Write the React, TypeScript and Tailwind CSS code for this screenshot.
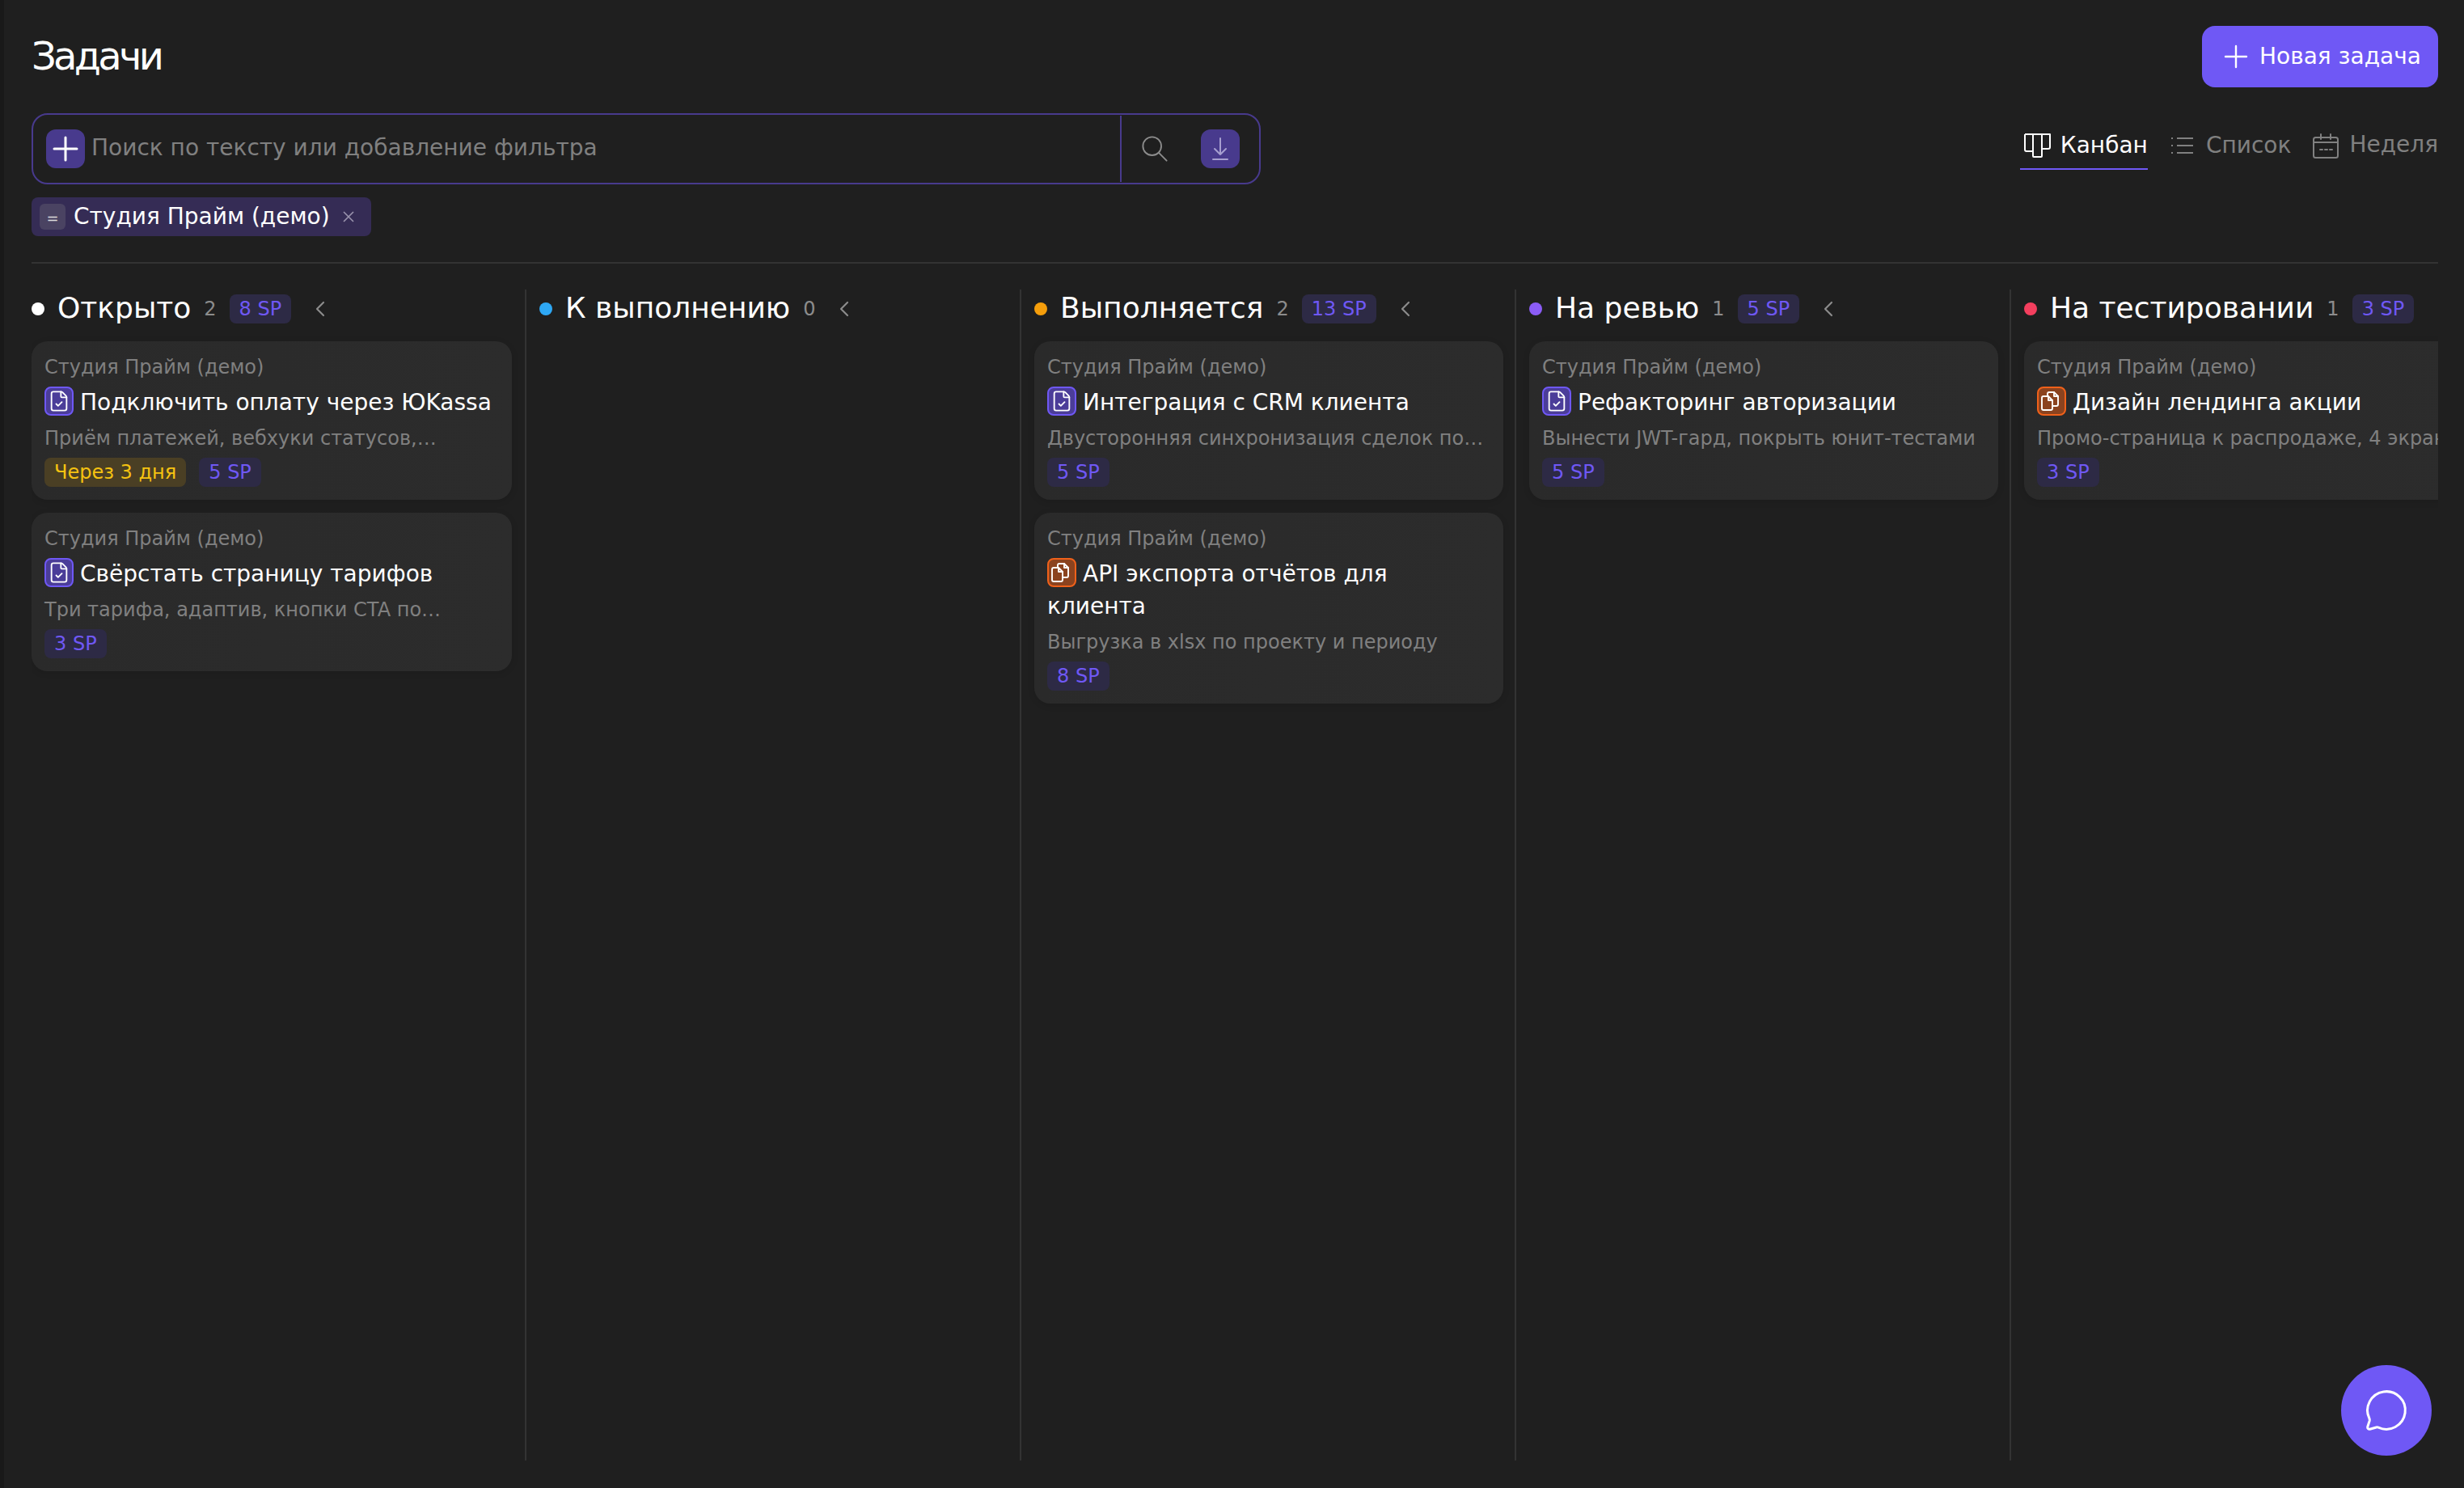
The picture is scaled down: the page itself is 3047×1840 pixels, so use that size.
import React from "react";

const SP = ({ v }: { v: string }) => (
  <span className="inline-flex h-[36px] items-center rounded-[8px] bg-[#2d2a45] px-[12px] text-[24px] leading-none text-[#6f58f5]">{v}</span>
);

const TaskIcon = () => (
  <span className="mr-[8px] inline-flex h-[36px] w-[36px] shrink-0 items-center justify-center rounded-[8px] border-2 border-[#6f58f5] bg-[#4b3d99] align-top">
    <svg width="28" height="28" viewBox="0 0 24 24" fill="none" stroke="#fff" strokeWidth="1.6" strokeLinecap="round" strokeLinejoin="round">
      <path d="M6 22a2 2 0 0 1-2-2V4a2 2 0 0 1 2-2h8a2.4 2.4 0 0 1 1.706.706l3.588 3.588A2.4 2.4 0 0 1 20 8v12a2 2 0 0 1-2 2z" />
      <path d="M14 2v5a1 1 0 0 0 1 1h5" />
      <path d="m9 15 2 2 4-4" />
    </svg>
  </span>
);

const CopyIcon = () => (
  <span className="mr-[8px] inline-flex h-[36px] w-[36px] shrink-0 items-center justify-center rounded-[8px] border-2 border-[#f0611a] bg-[#8b431f] align-top">
    <svg width="32" height="32" viewBox="0 0 32 32" fill="none" stroke="#fff" strokeWidth="1.9" strokeLinecap="round" strokeLinejoin="round">
      <path d="M4 12a2 2 0 0 1 2-2h6l5 5v10a2 2 0 0 1-2 2H6a2 2 0 0 1-2-2z" />
      <path d="M12 10v5h5" />
      <path d="M11 10V7a2 2 0 0 1 2-2h6l5 5v10a2 2 0 0 1-2 2h-5" />
      <path d="M19 5v5h5" />
    </svg>
  </span>
);

type Card = { title: string; desc: string; sp: string; kind: "task" | "copy"; due?: string };

const CardView = ({ c }: { c: Card }) => (
  <div className="flex flex-col rounded-[20px] bg-gradient-to-r from-[#2a2a2a] to-[#2c2c2c] p-[16px] shadow-[0_2px_8px_rgba(0,0,0,0.12)]">
    <div className="h-[32px] whitespace-nowrap text-[24px] leading-[32px] text-[#808080]">Студия Прайм (демо)</div>
    <div className="mt-[8px] text-[28px] leading-[40px] text-white">
      {c.kind === "task" ? <TaskIcon /> : <CopyIcon />}
      {c.title}
    </div>
    <div className="mt-[8px] h-[32px] whitespace-nowrap text-[24px] leading-[32px] text-[#808080]">{c.desc}</div>
    <div className="mt-[8px] flex gap-[16px]">
      {c.due && (
        <span className="inline-flex h-[36px] items-center rounded-[8px] bg-[#4a3f24] px-[12px] text-[24px] leading-none text-[#f5c211]">{c.due}</span>
      )}
      <SP v={c.sp} />
    </div>
  </div>
);

const Chevron = () => (
  <svg width="32" height="32" viewBox="0 0 24 24" fill="none" stroke="#8c8c8c" strokeWidth="1.6" strokeLinecap="round" strokeLinejoin="round">
    <path d="m15 18-6-6 6-6" />
  </svg>
);

type Col = { name: string; dot: string; count: string; sp?: string; chevron: boolean; cards: Card[]; cls: string };

const rest = "w-[612px] border-l-2 border-[#333333] pl-[16px] pr-[14px]";

const cols: Col[] = [
  {
    name: "Открыто",
    dot: "bg-white",
    count: "2",
    sp: "8 SP",
    chevron: true,
    cls: "w-[610px] pr-[16px]",
    cards: [
      { title: "Подключить оплату через ЮKassa", desc: "Приём платежей, вебхуки статусов,…", sp: "5 SP", kind: "task", due: "Через 3 дня" },
      { title: "Свёрстать страницу тарифов", desc: "Три тарифа, адаптив, кнопки CTA по…", sp: "3 SP", kind: "task" },
    ],
  },
  { name: "К выполнению", dot: "bg-[#2ea8f5]", count: "0", chevron: true, cls: rest, cards: [] },
  {
    name: "Выполняется",
    dot: "bg-[#f59e0b]",
    count: "2",
    sp: "13 SP",
    chevron: true,
    cls: rest,
    cards: [
      { title: "Интеграция с CRM клиента", desc: "Двусторонняя синхронизация сделок по…", sp: "5 SP", kind: "task" },
      { title: "API экспорта отчётов для клиента", desc: "Выгрузка в xlsx по проекту и периоду", sp: "8 SP", kind: "copy" },
    ],
  },
  {
    name: "На ревью",
    dot: "bg-[#8b5cf6]",
    count: "1",
    sp: "5 SP",
    chevron: true,
    cls: rest,
    cards: [{ title: "Рефакторинг авторизации", desc: "Вынести JWT-гард, покрыть юнит-тестами", sp: "5 SP", kind: "task" }],
  },
  {
    name: "На тестировании",
    dot: "bg-[#f43f5e]",
    count: "1",
    sp: "3 SP",
    chevron: false,
    cls: rest,
    cards: [{ title: "Дизайн лендинга акции", desc: "Промо-страница к распродаже, 4 экрана", sp: "3 SP", kind: "copy" }],
  },
];

const Column = ({ c }: { c: Col }) => (
  <div className={`h-full shrink-0 ${c.cls}`}>
    <div className="flex h-[64px] items-start pt-[6px]">
      <div className="flex h-[36px] items-center whitespace-nowrap">
        <span className={`h-[16px] w-[16px] shrink-0 rounded-full ${c.dot}`} />
        <span className="mb-[3px] ml-[16px] text-[36px] leading-none text-white">{c.name}</span>
        <span className="ml-[16px] text-[24px] leading-none text-[#8c8c8c]">{c.count}</span>
        {c.sp && (
          <span className="ml-[16px]">
            <SP v={c.sp} />
          </span>
        )}
        {c.chevron && (
          <span className="ml-[20px] flex">
            <Chevron />
          </span>
        )}
      </div>
    </div>
    <div className="flex flex-col gap-[16px]">
      {c.cards.map((card) => (
        <CardView key={card.title} c={card} />
      ))}
    </div>
  </div>
);

export default function App() {
  return (
    <div
      className="flex h-[1840px] w-[3047px] overflow-hidden bg-[#1f1f1f] text-white"
      style={{ fontFamily: '"DejaVu Sans", sans-serif' }}
    >
      <div className="w-[5px] shrink-0 bg-[#191919]" />
      <div className="flex min-w-0 flex-1 flex-col pl-[34px] pr-[32px]">
        <div className="flex h-[108px] items-start justify-between pt-[32px]">
          <h1 className="mt-[-1px] text-[48px] font-medium leading-[76px] tracking-[-3.7px] text-white">Задачи</h1>
          <button className="flex h-[76px] w-[292px] items-center gap-[13px] rounded-[16px] bg-[#6f58f5] pl-[26px] text-[28px] text-white">
            <svg width="32" height="32" viewBox="0 0 32 32" fill="none" stroke="#fff" strokeWidth="2.4" strokeLinecap="round">
              <path d="M16 3v26M3 16h26" />
            </svg>
            Новая задача
          </button>
        </div>

        <div className="mt-[32px] flex items-start justify-between">
          <div>
            <div className="flex h-[88px] w-[1520px] items-center rounded-[20px] border-2 border-[#483a8d]">
              <span className="ml-[16px] flex h-[48px] w-[48px] shrink-0 items-center justify-center rounded-[12px] bg-[#483a8d]">
                <svg width="32" height="32" viewBox="0 0 32 32" fill="none" stroke="#fff" strokeWidth="3" strokeLinecap="round">
                  <path d="M16 2v28M2 16h28" />
                </svg>
              </span>
              <span className="mb-[2px] ml-[8px] flex-1 whitespace-nowrap text-[28px] text-[#808080]">Поиск по тексту или добавление фильтра</span>
              <span className="h-[82px] w-[2px] bg-[#483a8d]" />
              <span className="ml-[24px] flex w-[34px]">
                <svg width="36" height="36" viewBox="0 0 36 36" fill="none" stroke="#8c8c8c" strokeWidth="2" strokeLinecap="round">
                  <circle cx="14.5" cy="14.5" r="12" />
                  <path d="m23.5 23.5 10 10" />
                </svg>
              </span>
              <span className="ml-[40px] mr-[24px] flex h-[48px] w-[48px] items-center justify-center rounded-[12px] bg-[#483a8d]">
                <svg width="32" height="32" viewBox="0 0 32 32" fill="none" stroke="#a79fd0" strokeWidth="2" strokeLinecap="round" strokeLinejoin="round">
                  <path d="M16 3v20M9 16l7 7 7-7M7 29h18" />
                </svg>
              </span>
            </div>
            <div className="mt-[16px] flex h-[48px] w-[420px] items-center rounded-[8px] bg-[#352c55] pl-[10px]">
              <span className="flex h-[32px] w-[32px] items-center justify-center rounded-[6px] bg-[#4a4362] pt-[3px] text-[18px] leading-none text-[#ddd]">=</span>
              <span className="ml-[10px] text-[28px] leading-none text-white">Студия Прайм (демо)</span>
              <svg className="ml-[16px]" width="14" height="14" viewBox="0 0 14 14" fill="none" stroke="#9a94ae" strokeWidth="1.6">
                <path d="M1 1l12 12M13 1 1 13" />
              </svg>
            </div>
          </div>

          <div className="flex items-start whitespace-nowrap text-[28px] leading-none">
            <div className="flex h-[70px] items-start border-b-2 border-[#6f58f5] pl-[5px] pt-[25px] text-white">
              <svg width="33" height="30" viewBox="0 0 33 30" fill="none" stroke="#fff" strokeWidth="2" strokeLinejoin="round">
                <path d="M1 1h31v16a2 2 0 0 1-2 2h-8M1 1v19a2 2 0 0 0 2 2h8M11 1v27a1 1 0 0 0 1 1h9a1 1 0 0 0 1-1V1" />
              </svg>
              <span className="ml-[12px] mt-[1px]">Канбан</span>
            </div>
            <div className="ml-[29px] flex items-start pt-[26px] text-[#808080]">
              <svg width="27" height="28" viewBox="0 0 27 28" fill="none" stroke="#808080" strokeWidth="2">
                <path d="M7 5h20M7 14h20M7 23h20" />
                <path d="M0 5h2M0 14h2M0 23h2" />
              </svg>
              <span className="ml-[16px]">Список</span>
            </div>
            <div className="ml-[27px] flex items-start pt-[25px] text-[#808080]">
              <svg width="32" height="31" viewBox="0 0 32 31" fill="none" stroke="#808080" strokeWidth="2" strokeLinecap="round">
                <rect x="1" y="5" width="30" height="25" rx="2.5" />
                <path d="M1 11h30M10 1v6M22 1v6M9 20h3M15 20h3M21 20h3" />
              </svg>
              <span className="ml-[13px]">Неделя</span>
            </div>
          </div>
        </div>

        <div className="mt-[32px] h-[2px] w-full shrink-0 bg-[#333333]" />

        <div className="mt-[32px] flex h-[1448px] overflow-hidden">
          {cols.map((c) => (
            <Column key={c.name} c={c} />
          ))}
        </div>
      </div>

      <button className="fixed left-[2895px] top-[1688px] flex h-[112px] w-[112px] items-center justify-center rounded-full bg-[#6f58f5]">
        <svg width="56" height="56" viewBox="0 0 24 24" fill="none" stroke="#fff" strokeWidth="1.3" strokeLinecap="round" strokeLinejoin="round">
          <path d="M2.992 16.342a2 2 0 0 1 .094 1.167l-1.065 3.29a1 1 0 0 0 1.236 1.168l3.413-.998a2 2 0 0 1 1.099.092 10 10 0 1 0-4.777-4.719" />
        </svg>
      </button>
    </div>
  );
}
